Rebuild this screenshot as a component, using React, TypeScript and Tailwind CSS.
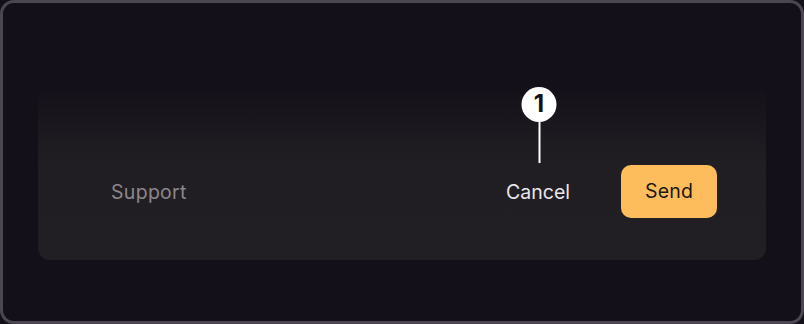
export default function App() {
  return (
    <div className="w-[804px] h-[324px] bg-[#141019]">
      <div
        className="w-full h-full rounded-[14px] border-[3px] border-[#4b4652] bg-[#141019] pt-[82px] px-[35px]"
        style={{ fontFamily: 'Inter, "Noto Sans", sans-serif' }}
      >
        {/* card */}
        <div className="h-[175px] rounded-[12px] bg-gradient-to-b from-[#141019] via-[#211e23] via-45% to-[#221f24] flex items-center pl-[73px] pr-[49px] pt-[38px]">
          <span className="text-[19.5px] leading-7 tracking-[0.3px] text-[#8b878d]">Support</span>
          <div className="ml-auto flex items-center gap-[51px]">
            <div className="relative">
              <span className="text-[19.5px] leading-7 text-[#e8e6ea]">Cancel</span>
              {/* callout */}
              <div className="absolute left-1/2 -translate-x-1/2 ml-px bottom-[43px] flex flex-col items-center">
                <div className="w-[35px] h-[35px] rounded-full bg-white flex items-center justify-center text-[24px] font-bold text-[#141019] leading-none">
                  1
                </div>
                <div className="w-[2px] h-[41px] bg-white" />
              </div>
            </div>
            <button className="w-[96px] h-[53px] rounded-[10px] bg-[#fdbd5c] text-[19.5px] tracking-[0.2px] text-[#1b1712]">
              Send
            </button>
          </div>
        </div>
      </div>
    </div>
  )
}
